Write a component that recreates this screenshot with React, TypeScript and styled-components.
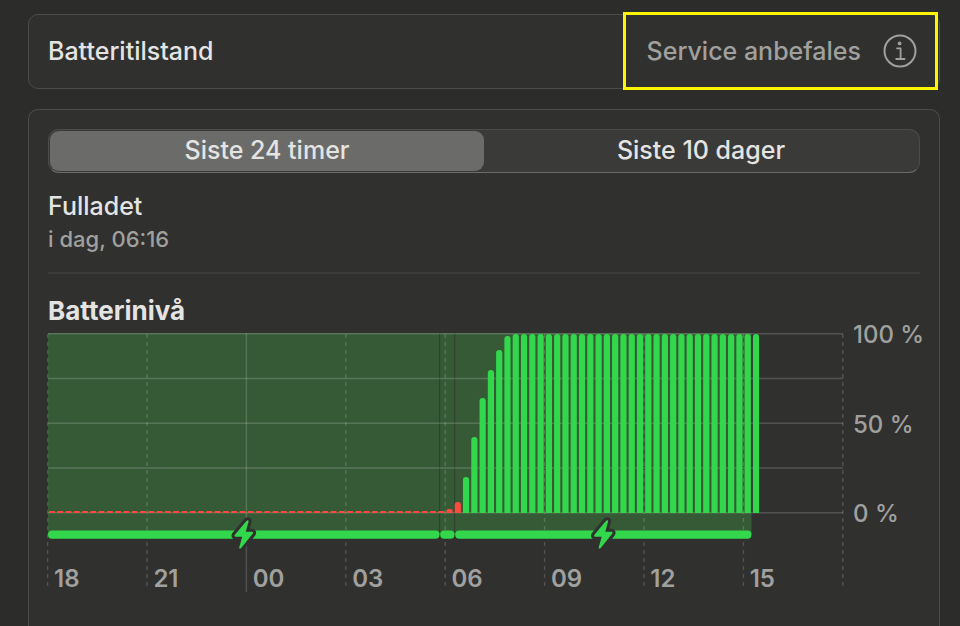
import React, { useState } from "react";
import styled, { createGlobalStyle } from "styled-components";

const GlobalStyle = createGlobalStyle`
  *, *::before, *::after { box-sizing: border-box; }
  html, body, #root { height: 100%; }
  body {
    margin: 0;
    background: #2c2c2a;
    color: #e4e4e3;
    font-family: Inter, "Liberation Sans", sans-serif;
    font-size: 25px;
    font-weight: 500;
    line-height: 30px;
    overflow: hidden;
  }
`;

const Page = styled.main`
  display: flex;
  flex-direction: column;
  gap: 20px;
  min-height: 100%;
  padding: 14px 20px 0 28px;
`;

const Card = styled.section<{ $open?: boolean }>`
  flex: ${(p) => (p.$open ? "1 0 auto" : "none")};
  padding: ${(p) => (p.$open ? "19px 19px 0" : "0")};
  background: #30302f;
  border: 1px solid #4b4b4a;
  border-bottom-width: ${(p) => (p.$open ? "0" : "1px")};
  border-radius: ${(p) => (p.$open ? "10px 10px 0 0" : "10px")};
`;

const HealthRow = styled.div`
  display: flex;
  justify-content: space-between;
  align-items: center;
  height: 73px;
  padding: 0 0 1px 19px;
`;

const Highlight = styled.div`
  display: flex;
  align-items: center;
  gap: 22px;
  height: 78px;
  margin: -3px 1px -3px 0;
  padding: 0 18px 0 21px;
  border: 3px solid #fbf503;
  color: #a0a09f;
`;

const InfoButton = styled.button`
  display: flex;
  padding: 0;
  border: 0;
  background: none;
  color: inherit;
`;

const Segmented = styled.div`
  display: flex;
  height: 44px;
  padding: 1px;
  border: 1px solid #4b4b4a;
  border-bottom-color: #6a6a69;
  border-radius: 11px;
  background: #3a3a39;
`;

const Segment = styled.button<{ $active: boolean }>`
  flex: 1;
  padding: 0 0 2px;
  border: 0;
  border-radius: 9px;
  background: ${(p) => (p.$active ? "#6b6b6a" : "transparent")};
  color: inherit;
  font: inherit;
`;

const Status = styled.div`
  padding: 18px 0 18px;
  border-bottom: 2px solid #3b3b3a;
`;

const Muted = styled.p`
  margin: 3px 0 0;
  color: #a0a09f;
  font-size: 22px;
`;

const Line = styled.p`
  margin: 0;
`;

const Title = styled.h2`
  margin: 22px 0 7px;
  font-size: 26px;
  font-weight: 700;
  line-height: 30px;
`;

const Figure = styled.div`
  display: grid;
  grid-template-columns: minmax(0, 1fr) 77px;
  grid-template-rows: 181px 78px;
  color: #a0a09f;
  font-size: 24px;
`;

const Plot = styled.svg`
  grid-area: 1 / 1 / 3 / 2;
  display: block;
  width: 100%;
  height: 100%;
  overflow: visible;
`;

const Levels = styled.div`
  grid-area: 1 / 2;
  display: flex;
  flex-direction: column;
  justify-content: space-between;
  margin: -13px 0 -15px;
  padding-left: 10px;
  white-space: nowrap;
`;

const Hours = styled.div`
  grid-area: 2 / 1;
  display: grid;
  grid-template-columns: repeat(8, 1fr);
  align-items: center;
  padding-top: 50px;
  font-weight: 600;
`;

const Hour = styled.span`
  padding-left: 6px;
`;

const HOUR = 99.4;
const SLOT = HOUR / 12;
const BASE = 180;
const ramp = [4, 11, 36, 76, 115, 143, 163, 177];
const bars = Array.from({ length: 86 }, (_, i) =>
  i < 48 ? 2 : i < 56 ? ramp[i - 48] : 179
);

function barPath(i: number, h: number) {
  const w = 6.2;
  const x = i * SLOT + 0.8;
  const r = Math.min(3, h / 2);
  const y = BASE - h;
  return `M${x} ${BASE}V${y + r}Q${x} ${y} ${x + r} ${y}H${x + w - r}Q${x + w} ${y} ${x + w} ${y + r}V${BASE}Z`;
}

const charging = [
  [0, 391.5],
  [392.2, 406.5],
  [407.2, 703.5],
];

function Bolt({ x }: { x: number }) {
  return (
    <path
      transform={`translate(${x} 186)`}
      d="M12.4 1.9L.7 16Q0 17.6 1.6 17.8H8.2L5.2 28.4Q5.2 30.4 7 29.2L18.9 14.6Q19.6 13 18 12.8H11.8L14.6 2.4Q14.6 .4 12.4 1.9Z"
      fill="#32d74b"
      stroke="#30302f"
      strokeWidth="6"
      strokeLinejoin="round"
      paintOrder="stroke"
    />
  );
}

function BatteryChart() {
  return (
    <Plot viewBox="0 0 795 259" preserveAspectRatio="none" role="img" aria-label="Batterinivå">
      <rect x="0" y="0" width="703.5" height="202" fill="#365a36" />
      {[391.7, 406.7].map((x) => (
        <path key={x} d={`M${x} 0V200`} stroke="#2b3f2b" strokeWidth="1" />
      ))}
      <g stroke="#fff" strokeOpacity="0.17" strokeWidth="1.4">
        {[0.8, 45.5, 90.3, 135, 179.8].map((y) => (
          <path key={y} d={`M0 ${y}H795`} />
        ))}
        {Array.from({ length: 9 }, (_, i) => (
          <path
            key={i}
            d={`M${i * HOUR - 0.4} ${i === 2 ? 0 : 1}V${i === 2 ? 259 : 256}`}
            strokeDasharray={i === 2 ? undefined : "4 4"}
          />
        ))}
      </g>
      {bars.map((h, i) => (
        <path key={i} d={barPath(i, h)} fill={i < 50 ? "#fc4b3e" : "#32d74b"} />
      ))}
      {charging.map(([a, b]) => (
        <rect key={a} x={a} y="197.6" width={b - a} height="8.2" rx="4" fill="#32d74b" />
      ))}
      <Bolt x={186} />
      <Bolt x={545.5} />
    </Plot>
  );
}

export default function App() {
  const [range, setRange] = useState(0);
  return (
    <>
      <GlobalStyle />
      <Page>
        <Card>
          <HealthRow>
            <span>Batteritilstand</span>
            <Highlight>
              <span>Service anbefales</span>
              <InfoButton aria-label="Info">
                <svg width="34" height="34" viewBox="0 0 34 34" fill="none" stroke="currentColor">
                  <circle cx="17" cy="17" r="15.5" strokeWidth="2" />
                  <circle cx="16.6" cy="9.4" r="1.9" fill="currentColor" stroke="none" />
                  <path d="M14 14.3H17.6V25M13.2 25H21.6" strokeWidth="1.8" strokeLinecap="round" strokeLinejoin="round" />
                </svg>
              </InfoButton>
            </Highlight>
          </HealthRow>
        </Card>
        <Card $open>
          <Segmented>
            {["Siste 24 timer", "Siste 10 dager"].map((label, i) => (
              <Segment key={label} $active={range === i} aria-pressed={range === i} onClick={() => setRange(i)}>
                {label}
              </Segment>
            ))}
          </Segmented>
          <Status>
            <Line>Fulladet</Line>
            <Muted>i dag, 06:16</Muted>
          </Status>
          <Title>Batterinivå</Title>
          <Figure>
            <BatteryChart />
            <Levels>
              <span>100 %</span>
              <span>50 %</span>
              <span>0 %</span>
            </Levels>
            <Hours>
              {["18", "21", "00", "03", "06", "09", "12", "15"].map((h) => (
                <Hour key={h}>{h}</Hour>
              ))}
            </Hours>
          </Figure>
        </Card>
      </Page>
    </>
  );
}
